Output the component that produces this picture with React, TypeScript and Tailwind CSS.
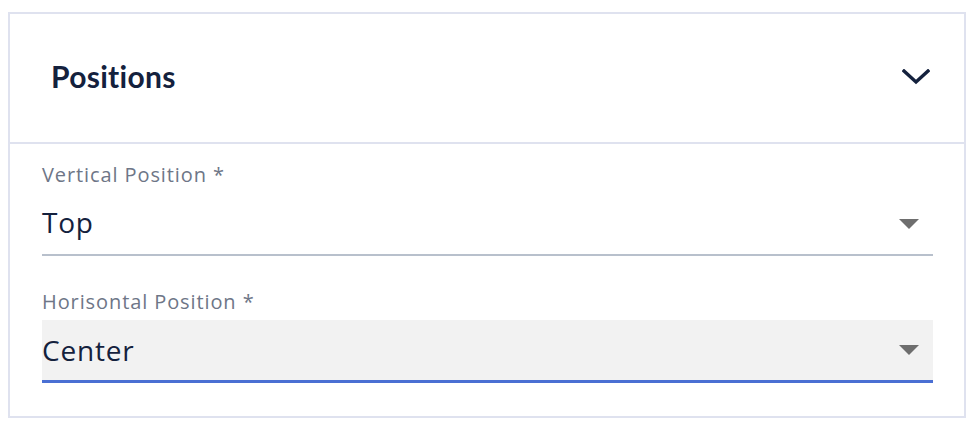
import React from "react";

function Caret() {
  return (
    <svg width="20" height="10" viewBox="0 0 20 10" className="shrink-0">
      <path d="M0 0 L20 0 L10 10 Z" fill="#6e6e6e" />
    </svg>
  );
}

export default function App() {
  return (
    <div className="w-[976px] h-[432px] bg-white pt-3 pl-2" style={{ fontFamily: "'Open Sans', 'Noto Sans', sans-serif" }}>
      <div className="w-[958px] h-[406px] border-2 border-[#dfe2ef] flex flex-col">
        <div className="h-[130px] border-b-2 border-[#dfe2ef] flex items-center justify-between pl-[41px] pr-[34px] shrink-0">
          <span className="text-[30px] font-bold text-[#14213d] leading-none -mt-[5px] tracking-[0.3px]" style={{ fontFamily: "Lato, sans-serif" }}>Positions</span>
          <svg width="28" height="16" viewBox="0 0 28 16" className="-mt-[2px]">
            <path d="M2 2 L14 13 L26 2" fill="none" stroke="#14213d" strokeWidth="3.4" strokeLinecap="square" />
          </svg>
        </div>
        <div className="pl-8 pr-[31px] pt-[19px] flex flex-col">
          <div className="h-6 text-[20px] leading-6 tracking-[0.9px] text-[#6e7687]">Vertical Position *</div>
          <div className="mt-[7px] h-[62px] border-b-2 border-[#b8c0cc] flex items-center justify-between pr-[14px]">
            <span className="text-[28px] leading-none tracking-[0.8px] text-[#14213d] -mt-[4px]">Top</span>
            <Caret />
          </div>
          <div className="mt-[34px] h-6 text-[20px] leading-6 tracking-[0.9px] text-[#6e7687]">Horisontal Position *</div>
          <div className="mt-[6px] h-[63px] bg-[#f2f2f2] border-b-[3px] border-[#4a6fd3] flex items-center justify-between pr-[14px]">
            <span className="text-[28px] leading-none tracking-[0.8px] text-[#14213d]">Center</span>
            <Caret />
          </div>
        </div>
      </div>
    </div>
  );
}
